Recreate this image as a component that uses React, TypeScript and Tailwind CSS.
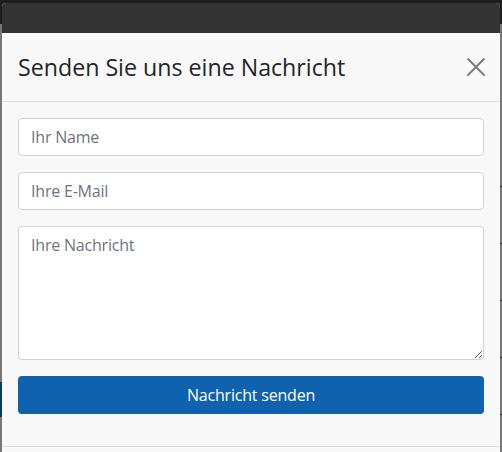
import { X } from 'lucide-react';

export default function App() {
  const ticks = [186, 243, 300, 357, 414];

  return (
    <div className="relative h-[452px] w-[502px] overflow-hidden bg-[#777777] font-['Open_Sans',sans-serif]">
      <div className="h-[24px] bg-[#1e1e1e]" />
      {/* bits of the page showing through the overlay */}
      <div className="absolute left-0 top-[382px] h-[35px] w-[2px] bg-[#0b3a66]" />
      {ticks.map((t) => (
        <div key={t} className="absolute right-0 h-px w-[2px] bg-[#222]" style={{ top: t }} />
      ))}

      <div className="absolute left-[2px] top-[3px] flex h-[460px] w-[498px] flex-col overflow-hidden rounded-t-[4px] bg-[#f8f8f8]">
        <div className="h-[30px] bg-[#333333]" />

        <div className="flex items-center justify-between border-b border-[#dee2e6] px-4 py-4">
          <h5 className="text-[23.2px] leading-[36px] text-[#212529]">Senden Sie uns eine Nachricht</h5>
          <button className="mr-[-8px] text-[#7a7a7a]">
            <X size={32} strokeWidth={1.4} />
          </button>
        </div>

        <form className="flex flex-col gap-4 border-b border-[#dee2e6] p-4 pb-8">
          <input
            placeholder="Ihr Name"
            className="h-[38px] rounded-[4px] border border-[#ced4da] bg-white px-3 text-base tracking-[-0.2px] text-[#495057] outline-none placeholder:text-[#6c757d]"
          />
          <input
            placeholder="Ihre E-Mail"
            className="h-[38px] rounded-[4px] border border-[#ced4da] bg-white px-3 text-base tracking-[-0.2px] text-[#495057] outline-none placeholder:text-[#6c757d]"
          />
          <textarea
            placeholder="Ihre Nachricht"
            className="h-[134px] rounded-[4px] border border-[#ced4da] bg-white px-3 py-[6px] text-base leading-6 tracking-[-0.2px] text-[#495057] outline-none placeholder:text-[#6c757d]"
          />
          <button
            type="button"
            className="h-[38px] rounded-[4px] bg-[#0f62ae] text-base tracking-[-0.2px] text-white"
          >
            Nachricht senden
          </button>
        </form>
      </div>
    </div>
  );
}
